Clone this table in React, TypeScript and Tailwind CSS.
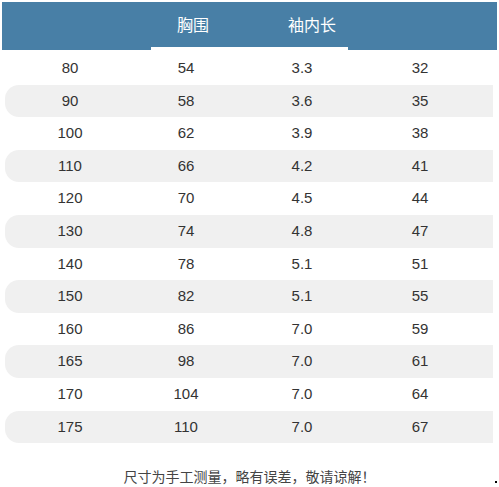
import React from 'react';

const rows: [string, string, string, string][] = [
  ['80', '54', '3.3', '32'],
  ['90', '58', '3.6', '35'],
  ['100', '62', '3.9', '38'],
  ['110', '66', '4.2', '41'],
  ['120', '70', '4.5', '44'],
  ['130', '74', '4.8', '47'],
  ['140', '78', '5.1', '51'],
  ['150', '82', '5.1', '55'],
  ['160', '86', '7.0', '59'],
  ['165', '98', '7.0', '61'],
  ['170', '104', '7.0', '64'],
  ['175', '110', '7.0', '67'],
];

const font = { fontFamily: '"Liberation Sans", Arial, "Noto Sans CJK SC", sans-serif' };

export default function App() {
  return (
    <div className="w-[499px] h-[487px] bg-white relative overflow-hidden" style={font}>
      <div className="pt-[2px] px-[2px]">
        <div className="relative h-[48px] bg-[#487fa6] flex items-center">
          <div className="w-[128px]" />
          <div className="w-[122px] text-center text-white text-[16px] pl-[4px]">胸围</div>
          <div className="w-[116px] text-center text-white text-[16px] pl-[4px]">袖内长</div>
          <div className="absolute left-[149px] w-[197px] bottom-0 h-[3px] bg-white" />
        </div>
      </div>
      <div className="mt-[2px] pl-[5px] pr-[6px]">
        {rows.map((r, i) => (
          <div
            key={r[0]}
            className={`flex items-center h-[32.6px] text-[15px] text-[#333] ${
              i % 2 === 1 ? 'bg-[#f0f0f0] rounded-l-[14px]' : ''
            }`}
          >
            <div className="w-[130px] text-center">{r[0]}</div>
            <div className="w-[102px] text-center">{r[1]}</div>
            <div className="w-[130px] text-center">{r[2]}</div>
            <div className="w-[106px] text-center">{r[3]}</div>
          </div>
        ))}
      </div>
      <div className="mt-[23px] text-center text-[14px] text-[#444]" style={{ fontFamily: '"Noto Sans CJK SC", sans-serif' }}>
        尺寸为手工测量，略有误差，敬请谅解！
      </div>
      <div className="absolute left-[495px] top-[481px] w-[2px] h-[2px] bg-black" />
    </div>
  );
}
